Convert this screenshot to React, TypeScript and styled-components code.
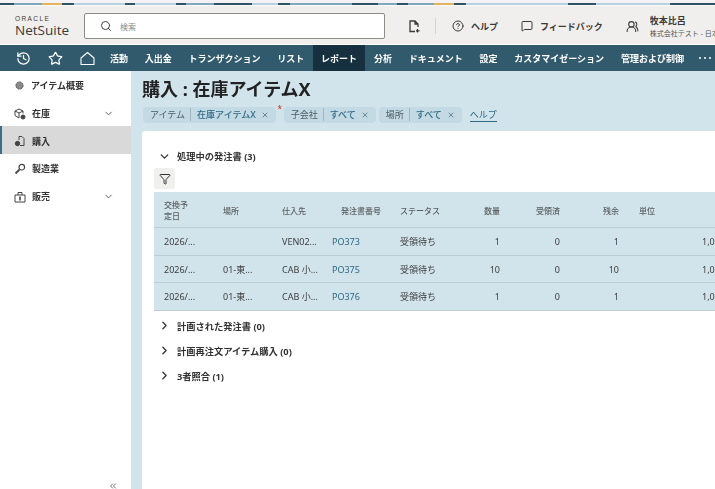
import styled, { createGlobalStyle } from 'styled-components';
import { ChevronDown, ChevronRight, ChevronsLeft, CircleHelp, Funnel, History, MessageSquare, Search, Star, UsersRound, X } from 'lucide-react';

const Global = createGlobalStyle`
    html, body { margin: 0; padding: 0; height: 100%; overflow: hidden; background: #fff; }
    body { font-family: "Noto Sans", "Noto Sans CJK JP", sans-serif; color: #2b2b2b; }
    #root { height: 100%; }
`;

const Page = styled.div`
    width: 715px;
    height: 489px;
    display: flex;
    flex-direction: column;
    overflow: hidden;
    filter: blur(0.45px);
`;
const Strip = styled.div`
    height: 5px;
    flex: none;
    border-top: 3px solid #f5f2f5;
    box-sizing: border-box;
    background: linear-gradient(90deg, #2f5466 0 14px, #7fa9bb 14px 42px, #e3b45d 42px 62px, #2f5466 62px 74px, #b5d2de 74px 125px, #2f5466 125px 135px, #b5d2de 135px 176px, #2f5466 176px 186px, #7fa9bb 186px 214px, #2f5466 214px 252px, #b5d2de 252px 278px, #2f5466 278px 290px, #7fa9bb 290px 352px, #2f5466 352px 378px, #7fa9bb 378px 397px, #2f5466 397px 408px, #7fa9bb 408px 434px, #e3b45d 434px 454px, #2f5466 454px 466px, #b5d2de 466px 568px, #2f5466 568px 596px, #b5d2de 596px 670px, #2f5466 670px 715px);
`;
const Header = styled.header`
    height: 40px;
    flex: none;
    box-sizing: border-box;
    display: flex;
    align-items: center;
    padding-top: 2px;
    background: #f1efed;
    border-top: 1px solid #fafafa;
    border-bottom: 1px solid #fff;
`;
const Logo = styled.div`
    width: 69px;
    margin-left: 15px;
    color: #3a3a38;
`;
const LogoTop = styled.div`
    font-size: 6.5px;
    letter-spacing: 1.4px;
    line-height: 7px;
    font-family: "Liberation Sans", sans-serif;
`;
const LogoName = styled.div`
    font-size: 13.5px;
    line-height: 16px;
    font-family: "Open Sans", sans-serif;
`;
const SearchBox = styled.div`
    width: 284px;
    height: 24px;
    display: flex;
    align-items: center;
    gap: 8px;
    padding-left: 15px;
    background: #fff;
    border: 1px solid #8d8c86;
    border-radius: 2px;
    font-size: 8px;
    color: #8b8b8b;
`;
const Tool = styled.div<{ $left: number }>`
    display: flex;
    align-items: center;
    gap: 7px;
    margin-left: ${p => p.$left}px;
    font-size: 9px;
    font-weight: 700;
    color: #3a3a38;
    white-space: nowrap;
`;
const Divider = styled.div`
    width: 1px;
    height: 16px;
    margin-left: 15px;
    background: #d6d4d0;
`;
const User = styled.div`
    margin-left: 11px;
    padding-top: 3px;
    width: 65px;
    overflow: hidden;
    white-space: nowrap;
`;
const UserName = styled.div`
    font-size: 9px;
    line-height: 13px;
    font-weight: 700;
    color: #3a3a38;
`;
const UserCompany = styled.div`
    font-size: 7px;
    line-height: 14px;
    color: #55544f;
`;
const Nav = styled.nav`
    height: 26px;
    flex: none;
    display: flex;
    align-items: stretch;
    background: #325a6d;
    color: #fff;
    white-space: nowrap;
`;
const NavIcons = styled.div`
    width: 101.5px;
    display: flex;
    align-items: center;
    gap: 17px;
    padding-left: 16px;
    box-sizing: border-box;
`;
const NavItem = styled.div<{ $active?: boolean }>`
    display: flex;
    align-items: center;
    padding: 0 8.4px;
    font-size: 9px;
    font-weight: 700;
    background: ${p => (p.$active ? '#16303f' : 'transparent')};
`;
const NavMore = styled.div`
    display: flex;
    align-items: center;
    gap: 3px;
    padding-left: 7px;
`;
const NavDot = styled.span`
    width: 2px;
    height: 2px;
    border-radius: 50%;
    background: #fff;
`;
const Body = styled.div`
    flex: 1;
    min-height: 0;
    display: flex;
`;
const Sidebar = styled.aside`
    width: 131px;
    flex: none;
    position: relative;
    background: #fff;
`;
const SideItem = styled.div<{ $active?: boolean }>`
    height: 27.7px;
    box-sizing: border-box;
    display: flex;
    align-items: center;
    gap: 6px;
    padding: 2px 0 0 14px;
    font-size: 9px;
    font-weight: 700;
    color: #333;
    background: ${p => (p.$active ? '#d9d9d9' : 'transparent')};
    box-shadow: ${p => (p.$active ? 'inset 2px 0 0 #3b7088' : 'none')};
`;
const SideChevron = styled(ChevronDown)`
    margin-left: auto;
    margin-right: 17px;
    color: #555;
`;
const Collapse = styled(ChevronsLeft)`
    position: absolute;
    right: 13px;
    bottom: -2px;
    color: #555;
`;
const Main = styled.main`
    flex: 1;
    min-width: 0;
    display: flex;
    flex-direction: column;
    background: #d1e4ec;
`;
const Title = styled.h1`
    margin: 8px 0 0 11px;
    font-size: 18px;
    line-height: 21px;
    font-weight: 700;
    color: #222;
`;
const Chips = styled.div`
    display: flex;
    align-items: center;
    margin: 6px 0 0 12px;
    height: 17px;
    white-space: nowrap;
`;
const Chip = styled.div<{ $left?: number }>`
    height: 16px;
    display: flex;
    align-items: center;
    gap: 5px;
    margin-left: ${p => p.$left ?? 0}px;
    padding: 0 7px 0 7px;
    border-radius: 4px;
    background: #c3d9e3;
    font-size: 9px;
    color: #4a5a62;
`;
const ChipValue = styled.span`
    padding-left: 6px;
    border-left: 1px solid #9fb5bf;
    color: #2d6a85;
    font-weight: 500;
`;
const Required = styled.span`
    width: 8px;
    align-self: flex-start;
    margin-top: -2px;
    text-align: center;
    font-size: 9px;
    line-height: 10px;
    color: #c0392b;
`;
const HelpLink = styled.span`
    margin-left: 8px;
    font-size: 9px;
    color: #2d6a85;
    border-bottom: 1px solid #2d6a85;
`;
const Card = styled.section`
    flex: 1;
    margin: 8px 0 0 11px;
    padding: 18px 0 0 12px;
    background: #fff;
    border-top-left-radius: 3px;
    overflow: hidden;
`;
const SectionRow = styled.div<{ $gap?: number }>`
    height: 14px;
    display: flex;
    align-items: center;
    gap: 6px;
    margin-top: ${p => p.$gap ?? 0}px;
    padding-left: 4px;
    font-size: 9.25px;
    font-weight: 700;
    color: #333;
    white-space: nowrap;
`;
const FilterButton = styled.div`
    width: 21px;
    height: 21px;
    display: flex;
    align-items: center;
    justify-content: center;
    margin-top: 5px;
    border-radius: 2px;
    background: #f0f0ee;
    color: #333;
`;
const Table = styled.div`
    margin: 3px 0 8px;
    background: #d1e4ec;
`;
const Row = styled.div<{ $head?: boolean }>`
    display: grid;
    grid-template-columns: 59px 59px 50px 68px 60px 60px 60px 59px 60px 60px;
    align-items: center;
    height: ${p => (p.$head ? 36 : 27.5)}px;
    padding-top: 1px;
    border-bottom: 1px solid #bccdd6;
    box-sizing: border-box;
    font-size: ${p => (p.$head ? 8 : 9)}px;
    font-weight: ${p => (p.$head ? 500 : 400)};
    color: ${p => (p.$head ? '#5c6062' : '#3d3d3d')};
`;
const Cell = styled.div<{ $right?: boolean; $link?: boolean; $inset?: number }>`
    padding: 0 10px 0 ${p => p.$inset ?? 10}px;
    text-align: ${p => (p.$right ? 'right' : 'left')};
    color: ${p => (p.$link ? '#2d6a85' : 'inherit')};
    line-height: 11px;
    white-space: nowrap;
`;

const HomeIcon = () => (
    <svg width="15" height="15" viewBox="0 0 15 15" fill="none" stroke="#fff" strokeWidth="1.1">
        <path d="M1 13.5V7L7.5 1.5L14 7V13.5Z" strokeLinejoin="round" />
    </svg>
);
const DocIcon = () => (
    <svg width="12" height="13" viewBox="0 0 12 13" fill="none" stroke="#3a3a38" strokeWidth="1.3">
        <path d="M7 11.5H2V1H7L10 4V7M7 1V4H10M9.5 9V12.5M8 10.8H11.5" />
    </svg>
);
const OverviewIcon = () => (
    <svg width="11" height="11" viewBox="0 0 11 11">
        <circle cx="5.5" cy="5.5" r="3.6" fill="#8a8a8a" stroke="#555" strokeWidth="1" strokeDasharray="2 0.7" />
    </svg>
);
const StockIcon = () => (
    <svg width="12" height="12" viewBox="0 0 12 12" fill="none" stroke="#444" strokeWidth="1">
        <path d="M5 1L9 3V5.5M5 1L1 3V7.5L5 10M1 3L5 5V10M5 5L9 3" />
        <circle cx="9" cy="9" r="2" fill="#444" />
    </svg>
);
const PurchaseIcon = () => (
    <svg width="12" height="12" viewBox="0 0 12 12" fill="none" stroke="#444" strokeWidth="1">
        <path d="M5 1.5H8L10 3.5V10.5H6M5 1.5V5" />
        <circle cx="3.5" cy="8.5" r="2.2" fill="#444" />
    </svg>
);
const MakeIcon = () => (
    <svg width="12" height="12" viewBox="0 0 12 12" fill="none" stroke="#444" strokeWidth="1.2">
        <circle cx="7.8" cy="4.2" r="2.8" />
        <path d="M5.6 6.4L1.5 10.5" strokeWidth="1.8" />
    </svg>
);
const SalesIcon = () => (
    <svg width="12" height="12" viewBox="0 0 12 12" fill="none" stroke="#444" strokeWidth="1">
        <path d="M1 4H11V11H1ZM4 4V1.5H8V4" />
        <path d="M6 5.5V9.5" strokeWidth="1.6" />
    </svg>
);

const navItems = ['活動', '入出金', 'トランザクション', 'リスト', 'レポート', '分析', 'ドキュメント', '設定', 'カスタマイゼーション', '管理および制御'];
const orders = [
    { date: '2026/...', place: '', vendor: 'VEN02...', po: 'PO373', qty: 1 },
    { date: '2026/...', place: '01-東...', vendor: 'CAB 小...', po: 'PO375', qty: 10 },
    { date: '2026/...', place: '01-東...', vendor: 'CAB 小...', po: 'PO376', qty: 1 },
];

export default function App() {
    return (
        <Page>
            <Global />
            <Strip />
            <Header>
                <Logo>
                    <LogoTop>ORACLE</LogoTop>
                    <LogoName>NetSuite</LogoName>
                </Logo>
                <SearchBox>
                    <Search size={12} color="#444" />
                    <span>検索</span>
                </SearchBox>
                <Tool $left={23}><DocIcon /></Tool>
                <Divider />
                <Tool $left={16}><CircleHelp size={12} />ヘルプ</Tool>
                <Tool $left={23}><MessageSquare size={12} />フィードバック</Tool>
                <Tool $left={23}><UsersRound size={13} /></Tool>
                <User>
                    <UserName>牧本比呂</UserName>
                    <UserCompany>株式会社テスト - 日本</UserCompany>
                </User>
            </Header>
            <Nav>
                <NavIcons>
                    <History size={15} />
                    <Star size={15} />
                    <HomeIcon />
                </NavIcons>
                {navItems.map(item => (
                    <NavItem key={item} $active={item === 'レポート'}>{item}</NavItem>
                ))}
                <NavMore><NavDot /><NavDot /><NavDot /></NavMore>
            </Nav>
            <Body>
                <Sidebar>
                    <SideItem><OverviewIcon />アイテム概要</SideItem>
                    <SideItem><StockIcon />在庫<SideChevron size={11} /></SideItem>
                    <SideItem $active><PurchaseIcon />購入</SideItem>
                    <SideItem><MakeIcon />製造業</SideItem>
                    <SideItem><SalesIcon />販売<SideChevron size={11} /></SideItem>
                    <Collapse size={10} />
                </Sidebar>
                <Main>
                    <Title>購入 : 在庫アイテムX</Title>
                    <Chips>
                        <Chip>アイテム<ChipValue>在庫アイテムX</ChipValue><X size={8} /></Chip>
                        <Required>*</Required>
                        <Chip>子会社<ChipValue>すべて</ChipValue><X size={8} /></Chip>
                        <Chip $left={3}>場所<ChipValue>すべて</ChipValue><X size={8} /></Chip>
                        <HelpLink>ヘルプ</HelpLink>
                    </Chips>
                    <Card>
                        <SectionRow><ChevronDown size={13} strokeWidth={2.4} />処理中の発注書 (3)</SectionRow>
                        <FilterButton><Funnel size={12} /></FilterButton>
                        <Table>
                            <Row $head>
                                <Cell>交換予<br />定日</Cell>
                                <Cell>場所</Cell>
                                <Cell>仕入先</Cell>
                                <Cell $inset={19}>発注書番号</Cell>
                                <Cell>ステータス</Cell>
                                <Cell $right>数量</Cell>
                                <Cell $right>受領済</Cell>
                                <Cell $right>残余</Cell>
                                <Cell>単位</Cell>
                                <Cell />
                            </Row>
                            {orders.map(o => (
                                <Row key={o.po}>
                                    <Cell>{o.date}</Cell>
                                    <Cell>{o.place}</Cell>
                                    <Cell>{o.vendor}</Cell>
                                    <Cell $link>{o.po}</Cell>
                                    <Cell>受領待ち</Cell>
                                    <Cell $right>{o.qty}</Cell>
                                    <Cell $right>0</Cell>
                                    <Cell $right>{o.qty}</Cell>
                                    <Cell />
                                    <Cell $inset={13}>1,000.00</Cell>
                                </Row>
                            ))}
                        </Table>
                        <SectionRow><ChevronRight size={13} strokeWidth={2.4} />計画された発注書 (0)</SectionRow>
                        <SectionRow $gap={11}><ChevronRight size={13} strokeWidth={2.4} />計画再注文アイテム購入 (0)</SectionRow>
                        <SectionRow $gap={11}><ChevronRight size={13} strokeWidth={2.4} />3者照合 (1)</SectionRow>
                    </Card>
                </Main>
            </Body>
        </Page>
    );
}
